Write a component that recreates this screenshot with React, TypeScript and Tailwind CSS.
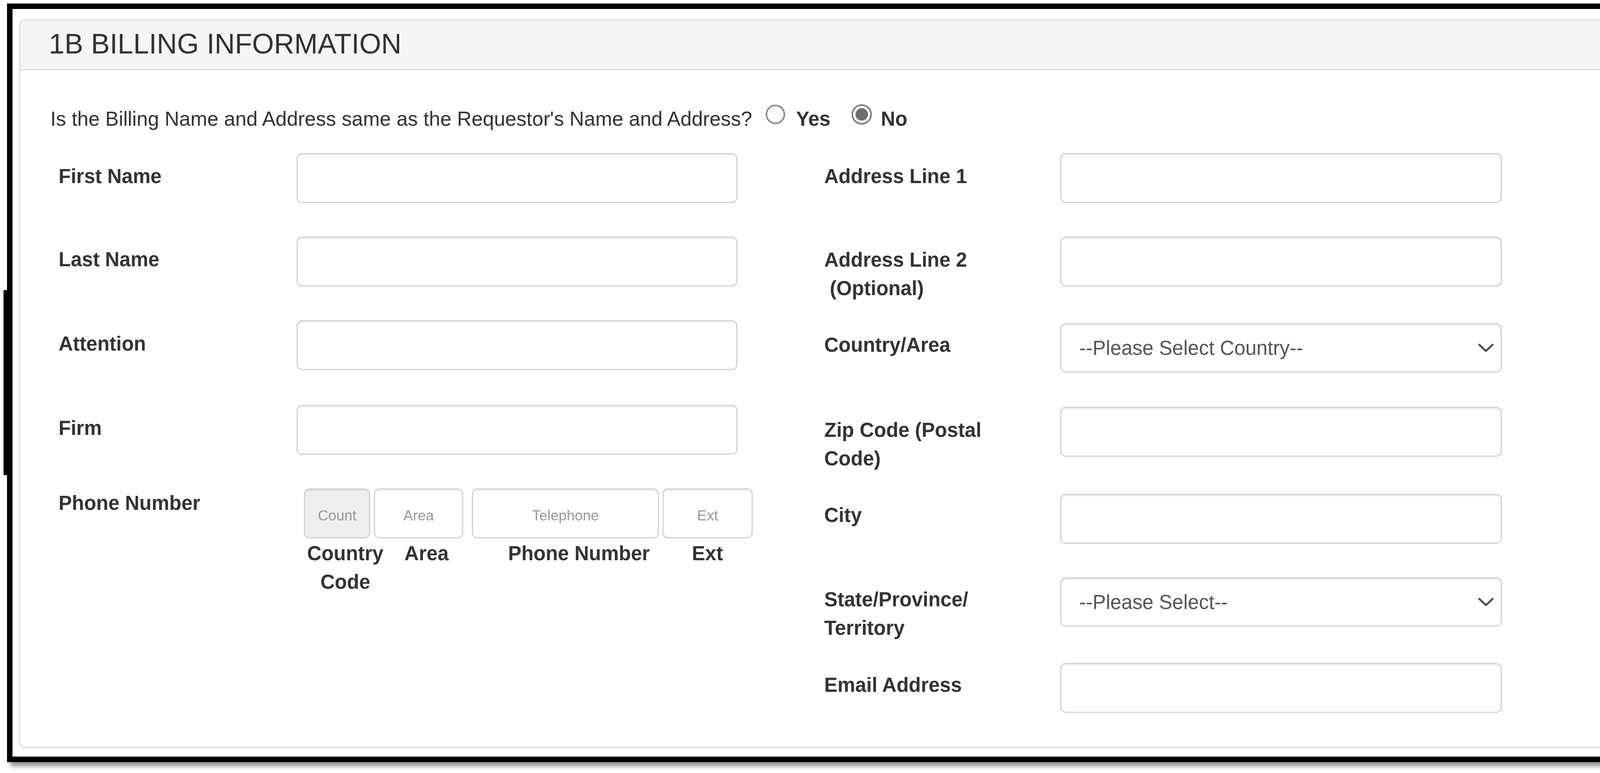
import React from "react";

const font = { fontFamily: '"Liberation Sans", Arial, Helvetica, sans-serif' };

const boxBase =
  "h-[128px] rounded-[14px] border-[3px] border-[#d3d3d3] bg-white shadow-[inset_0_3px_3px_rgba(0,0,0,0.075)]";

function TextBox({ w }: { w: string }) {
  return <div className={`${w} ${boxBase} shrink-0`} />;
}

function Chevron() {
  return (
    <svg width="42" height="24" viewBox="0 0 42 24" fill="none">
      <path
        d="M4 4 L21 20 L38 4"
        stroke="#4a4a4a"
        strokeWidth="5"
        strokeLinecap="round"
        strokeLinejoin="round"
      />
    </svg>
  );
}

function SelectBox({ text }: { text: string }) {
  return (
    <div className="w-[1131px] shrink-0 h-[126px] rounded-[14px] border-[3px] border-[#d3d3d3] bg-white shadow-[inset_0_3px_3px_rgba(0,0,0,0.075)] flex items-center justify-between pl-[46px] pr-[17px] text-[#555555] text-[51px] leading-[73px] font-normal">
      <span>{text}</span>
      <Chevron />
    </div>
  );
}

function Row({
  h,
  pt,
  lw,
  label,
  children,
}: {
  h: string;
  pt: string;
  lw: string;
  label: React.ReactNode;
  children: React.ReactNode;
}) {
  return (
    <div className={`flex ${h}`}>
      <div className={`${lw} ${pt} shrink-0 font-bold text-[51px] leading-[73px] text-[#333333]`}>{label}</div>
      <div className="shrink-0">{children}</div>
    </div>
  );
}

function PhoneBox({ w, ml, bg, text }: { w: string; ml: string; bg: string; text: string }) {
  return (
    <div
      className={`${w} ${ml} ${bg} shrink-0 h-[128px] rounded-[14px] border-[3px] border-[#d3d3d3] shadow-[inset_0_3px_3px_rgba(0,0,0,0.075)] flex items-center justify-center pt-[12px] text-[37px] text-[#999999]`}
    >
      {text}
    </div>
  );
}

export default function App() {
  return (
    <div className="relative w-[4245px] h-[1980px] bg-white overflow-hidden text-[#333333]" style={font}>
      {/* frame side jogs */}
      <div className="absolute left-[9px] top-[743px] w-[16px] h-[474px] bg-black" />
      <div className="absolute left-[4200px] top-[743px] w-[20px] h-[474px] bg-black shadow-[6px_8px_10px_rgba(0,0,0,0.35)]" />

      <div className="pl-[18px] pt-[9px]">
        <div className="relative w-[4189px] h-[1943px] border-[14px] border-black bg-white shadow-[8px_10px_12px_rgba(0,0,0,0.45)] pl-[17px] pt-[27px]">
          {/* panel */}
          <div className="w-[4121px] h-[1865px] border-[3px] border-[#dddddd] rounded-[14px] overflow-hidden bg-white shadow-[0_3px_3px_rgba(0,0,0,0.05)]">
            <div className="h-[127px] bg-[#f5f5f5] border-b-[3px] border-[#dddddd] pl-[73px] pt-[23px] text-[72px] leading-[72px] text-[#333333]">
              1B BILLING INFORMATION
            </div>

            {/* question */}
            <div className="pl-[77px] pt-[88px] flex items-start text-[51px] leading-[73px] text-[#333333]">
              <span className="w-[1831px] shrink-0 text-[51.6px]">
                Is the Billing Name and Address same as the Requestor's Name and Address?
              </span>
              <div className="w-[50px] h-[50px] shrink-0 rounded-full border-[4px] border-[#8a8a8a] bg-white" />
              <span className="ml-[28px] font-bold">Yes</span>
              <div className="ml-[54px] w-[52px] h-[52px] shrink-0 -mt-[1px] rounded-full border-[4px] border-[#7a7a7a] bg-white flex items-center justify-center">
                <div className="w-[32px] h-[32px] rounded-full bg-[#6e6e6e]" />
              </div>
              <span className="ml-[23px] font-bold">No</span>
            </div>

            {/* form columns */}
            <div className="mt-[51px] pl-[98px] flex items-start">
              {/* left column */}
              <div className="w-[1738px] shrink-0 flex flex-col">
                <Row h="h-[214px]" pt="pt-[23px]" lw="w-[609px]" label="First Name">
                  <TextBox w="w-[1129px]" />
                </Row>
                <Row h="h-[214px]" pt="pt-[22px]" lw="w-[609px]" label="Last Name">
                  <TextBox w="w-[1129px]" />
                </Row>
                <Row h="h-[217px]" pt="pt-[24px]" lw="w-[609px]" label="Attention">
                  <TextBox w="w-[1129px]" />
                </Row>
                <Row h="h-[214px]" pt="pt-[23px]" lw="w-[609px]" label="Firm">
                  <TextBox w="w-[1129px]" />
                </Row>
                <div className="flex">
                  <div className="w-[609px] shrink-0 pt-[1px] font-bold text-[51px] leading-[73px] text-[#333333]">
                    Phone Number
                  </div>
                  <div className="ml-[19px] shrink-0 flex flex-col">
                    <div className="flex">
                      <PhoneBox w="w-[170px]" ml="ml-0" bg="bg-[#eeeeee]" text="Count" />
                      <PhoneBox w="w-[229px]" ml="ml-[9px]" bg="bg-white" text="Area" />
                      <PhoneBox w="w-[479px]" ml="ml-[22px]" bg="bg-white" text="Telephone" />
                      <PhoneBox w="w-[231px]" ml="ml-[9px]" bg="bg-white" text="Ext" />
                    </div>
                    <div className="mt-[2px] flex font-bold text-center text-[51px] leading-[73px] text-[#333333]">
                      <div className="w-[212px] shrink-0">
                        Country
                        <br />
                        Code
                      </div>
                      <div className="w-[204px] shrink-0">Area</div>
                      <div className="w-[576px] shrink-0">Phone Number</div>
                      <div className="w-[82px] shrink-0">Ext</div>
                    </div>
                  </div>
                </div>
              </div>

              {/* right column */}
              <div className="ml-[222px] w-[1735px] shrink-0 flex flex-col">
                <Row h="h-[214px]" pt="pt-[23px]" lw="w-[604px]" label="Address Line 1">
                  <TextBox w="w-[1131px]" />
                </Row>
                <Row
                  h="h-[222px]"
                  pt="pt-[23px]"
                  lw="w-[604px]"
                  label={
                    <>
                      Address Line 2
                      <br />
                      {"\u00a0(Optional)"}
                    </>
                  }
                >
                  <TextBox w="w-[1131px]" />
                </Row>
                <Row h="h-[214px]" pt="pt-[19px]" lw="w-[604px]" label="Country/Area">
                  <SelectBox text="--Please Select Country--" />
                </Row>
                <Row
                  h="h-[223px]"
                  pt="pt-[23px]"
                  lw="w-[604px]"
                  label={
                    <>
                      Zip Code (Postal
                      <br />
                      Code)
                    </>
                  }
                >
                  <TextBox w="w-[1131px]" />
                </Row>
                <Row h="h-[214px]" pt="pt-[18px]" lw="w-[604px]" label="City">
                  <TextBox w="w-[1131px]" />
                </Row>
                <Row
                  h="h-[219px]"
                  pt="pt-[20px]"
                  lw="w-[604px]"
                  label={
                    <>
                      State/Province/
                      <br />
                      Territory
                    </>
                  }
                >
                  <SelectBox text="--Please Select--" />
                </Row>
                <Row h="h-[128px]" pt="pt-[20px]" lw="w-[604px]" label="Email Address">
                  <TextBox w="w-[1131px]" />
                </Row>
              </div>
            </div>
          </div>
        </div>
      </div>
    </div>
  );
}
